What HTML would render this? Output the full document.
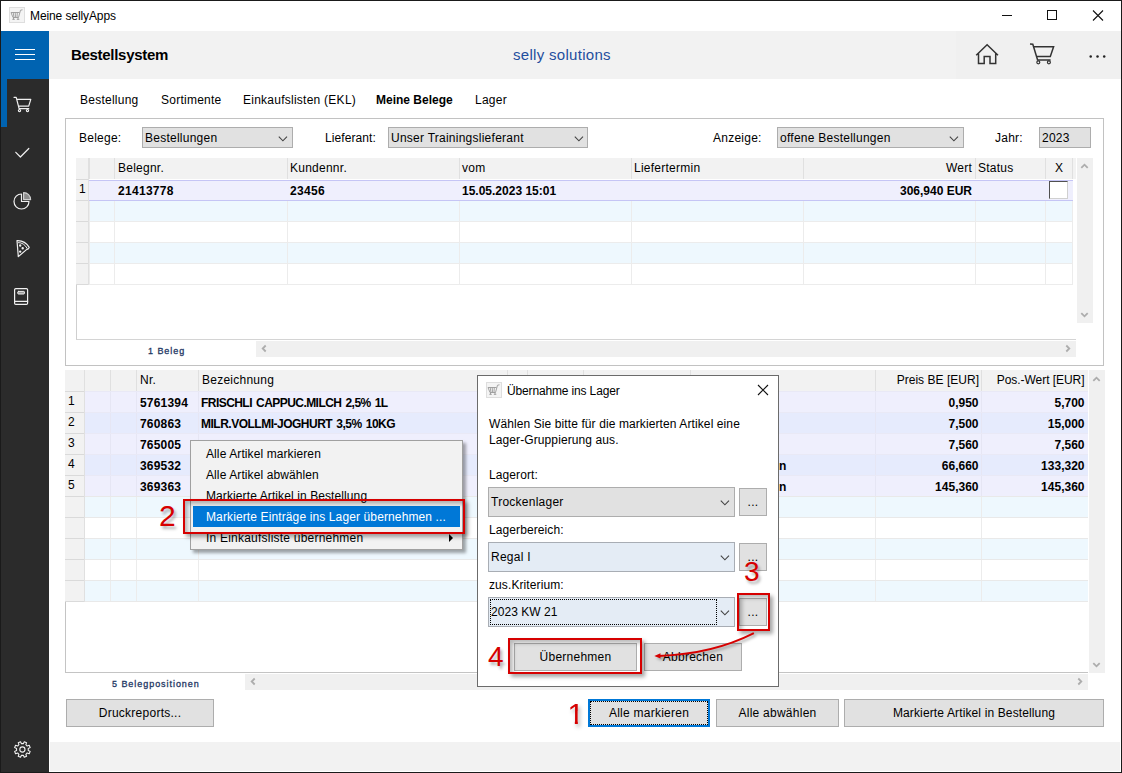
<!DOCTYPE html>
<html lang="de">
<head>
<meta charset="utf-8">
<title>Meine sellyApps</title>
<style>
*{box-sizing:border-box;margin:0;padding:0}
html,body{width:1122px;height:773px;overflow:hidden;background:#fff}
body{position:relative;font-family:"Liberation Sans",sans-serif;font-size:12px;color:#000;line-height:14px}
.a{position:absolute}
.t{position:absolute;white-space:nowrap;line-height:14px;letter-spacing:.25px}
.b{font-weight:bold;letter-spacing:0}
#frame{left:0;top:0;width:1122px;height:773px;border:1px solid #1a1a1a;z-index:50;pointer-events:none}
#titlebar{left:1px;top:1px;width:1120px;height:30px;background:#fff}
#side{left:1px;top:31px;width:48px;height:741px;background:#2b2b2b}
#burger{left:1px;top:31px;width:48px;height:48px;background:#0063b1}
#strip{left:1px;top:79px;width:6px;height:48px;background:#0063b1}
#head{left:49px;top:31px;width:1072px;height:48px;background:#f2f2f2}
#foot{left:50px;top:742px;width:1070px;height:29px;background:#f2f2f2}
.panel{border:1px solid #c2c2c2;background:#fff}
.combo{background:#e1e1e1;border:1px solid #adadad}
.combo.hot{background:#e4ecf5;border-color:#a8adb4}
.btn{background:#e1e1e1;border:1px solid #adadad;text-align:center;letter-spacing:.25px}
.hdr{background:#f2f2f2}
.vl{position:absolute;width:1px;background:#ececec}
.hl{position:absolute;height:1px;background:#ececec}
.red{color:#d60000;font-size:30px;line-height:30px;text-shadow:2px 3px 3px rgba(0,0,0,.3);letter-spacing:0}
.rbox{border:2.5px solid #d60000;box-shadow:3px 3px 4px rgba(0,0,0,.35), inset 3px 3px 4px rgba(0,0,0,.28)}
.sb{background:#f0f0f0}
.small{font-size:9px;letter-spacing:.95px;color:#1f3864;-webkit-text-stroke:.3px #1f3864}
</style>
</head>
<body>
<div class="a" id="titlebar"></div>
<div class="a" id="head"></div>
<div class="a" id="foot"></div>
<div class="a" id="side"></div>
<div class="a" id="burger"></div>
<div class="a" id="strip"></div>

<!-- TITLEBAR -->
<div class="t" style="left:30px;top:9px;font-size:12px;letter-spacing:-.1px">Meine sellyApps</div>

<!-- HEADER -->
<div class="t b" style="left:71px;top:46px;font-size:15px;line-height:18px;letter-spacing:-.3px">Bestellsystem</div>
<div class="t" style="left:513px;top:46px;font-size:15px;line-height:18px;color:#1f4e9e;letter-spacing:.3px">selly solutions</div>

<!-- TABS -->
<div class="t" style="left:80px;top:93px">Bestellung</div>
<div class="t" style="left:161px;top:93px">Sortimente</div>
<div class="t" style="left:243px;top:93px">Einkaufslisten (EKL)</div>
<div class="t b" style="left:376px;top:93px">Meine Belege</div>
<div class="t" style="left:475px;top:93px">Lager</div>

<!-- PANEL1 -->
<div class="a panel" id="p1" style="left:65px;top:118px;width:1039px;height:248px"></div>

<!-- SECTIONS -->

<div class="t" style="left:79px;top:131px">Belege:</div>
<div class="a combo" style="left:142px;top:127px;width:151px;height:21px"></div>
<div class="t" style="left:145px;top:131px">Bestellungen</div>
<svg class="a" style="left:278px;top:136px" width="10" height="6" viewBox="0 0 10 6"><path d="M0.8 0.6 L4.9 4.8 L9 0.6" fill="none" stroke="#444" stroke-width="1.1"/></svg>
<div class="t" style="left:325px;top:131px;letter-spacing:.08px">Lieferant:</div>
<div class="a combo" style="left:388px;top:127px;width:200px;height:21px"></div>
<div class="t" style="left:391px;top:131px">Unser Trainingslieferant</div>
<svg class="a" style="left:574px;top:136px" width="10" height="6" viewBox="0 0 10 6"><path d="M0.8 0.6 L4.9 4.8 L9 0.6" fill="none" stroke="#444" stroke-width="1.1"/></svg>
<div class="t" style="left:713px;top:131px">Anzeige:</div>
<div class="a combo" style="left:777px;top:127px;width:187px;height:21px"></div>
<div class="t" style="left:780px;top:131px">offene Bestellungen</div>
<svg class="a" style="left:949px;top:136px" width="10" height="6" viewBox="0 0 10 6"><path d="M0.8 0.6 L4.9 4.8 L9 0.6" fill="none" stroke="#444" stroke-width="1.1"/></svg>
<div class="t" style="left:995px;top:131px">Jahr:</div>
<div class="a combo" style="left:1039px;top:127px;width:52px;height:21px"></div>
<div class="t" style="left:1042px;top:131px">2023</div>

<div class="a" style="left:76px;top:158px;width:1000px;height:182px;border-left:1px solid #cfcfcf;border-bottom:1px solid #d4d4d4"></div>
<div class="a hdr" style="left:76px;top:158px;width:1000px;height:21px"></div>
<div class="a hdr" style="left:76px;top:158px;width:13px;height:127px"></div>
<div class="a" style="left:89px;top:180px;width:984px;height:21px;background:#efeffd;border-top:1px solid #c5c5f5;border-bottom:1px solid #c5c5f5"></div>
<div class="a" style="left:89px;top:201px;width:983px;height:20px;background:#eef8fe"></div>
<div class="a" style="left:89px;top:243px;width:983px;height:20px;background:#eef8fe"></div>
<div class="vl" style="left:89px;top:158px;height:21px;background:#e0e0e0"></div>
<div class="vl" style="left:89px;top:201px;height:84px"></div>
<div class="vl" style="left:114px;top:158px;height:21px;background:#e0e0e0"></div>
<div class="vl" style="left:114px;top:201px;height:84px"></div>
<div class="vl" style="left:287px;top:158px;height:21px;background:#e0e0e0"></div>
<div class="vl" style="left:287px;top:201px;height:84px"></div>
<div class="vl" style="left:459px;top:158px;height:21px;background:#e0e0e0"></div>
<div class="vl" style="left:459px;top:201px;height:84px"></div>
<div class="vl" style="left:631px;top:158px;height:21px;background:#e0e0e0"></div>
<div class="vl" style="left:631px;top:201px;height:84px"></div>
<div class="vl" style="left:803px;top:158px;height:21px;background:#e0e0e0"></div>
<div class="vl" style="left:803px;top:201px;height:84px"></div>
<div class="vl" style="left:975px;top:158px;height:21px;background:#e0e0e0"></div>
<div class="vl" style="left:975px;top:201px;height:84px"></div>
<div class="vl" style="left:1045px;top:158px;height:21px;background:#e0e0e0"></div>
<div class="vl" style="left:1045px;top:201px;height:84px"></div>
<div class="vl" style="left:1072px;top:158px;height:21px;background:#e0e0e0"></div>
<div class="vl" style="left:1072px;top:201px;height:84px"></div>
<div class="hl" style="left:76px;top:221px;width:997px"></div>
<div class="hl" style="left:76px;top:242px;width:997px"></div>
<div class="hl" style="left:76px;top:263px;width:997px"></div>
<div class="hl" style="left:76px;top:284px;width:997px"></div>
<div class="t" style="left:118px;top:161px">Belegnr.</div>
<div class="t" style="left:290px;top:161px">Kundennr.</div>
<div class="t" style="left:462px;top:161px">vom</div>
<div class="t" style="left:634px;top:161px">Liefertermin</div>
<div class="t" style="left:978px;top:161px">Status</div>
<div class="t" style="left:1055px;top:161px">X</div>
<div class="t" style="left:803px;top:161px;width:169px;text-align:right">Wert</div>
<div class="t" style="left:79px;top:182px">1</div>
<div class="t b" style="left:118px;top:184px;letter-spacing:.3px">21413778</div>
<div class="t b" style="left:290px;top:184px;letter-spacing:.3px">23456</div>
<div class="t b" style="left:462px;top:184px">15.05.2023 15:01</div>
<div class="t b" style="left:803px;top:184px;width:169px;text-align:right">306,940 EUR</div>
<div class="a" style="left:1049px;top:181px;width:19px;height:18px;background:#fff;border:1px solid #d0d0d0;border-left:1px solid #505050;border-top:1px solid #505050"></div>
<div class="a sb" style="left:1077px;top:158px;width:16px;height:165px"></div>
<svg class="a" style="left:1080px;top:163px" width="9" height="6" viewBox="0 0 9 6"><path d="M1.3 4.9 L4.5 1.7 L7.7 4.9" fill="none" stroke="#adadad" stroke-width="1.8"/></svg>
<svg class="a" style="left:1080px;top:312px" width="9" height="6" viewBox="0 0 9 6"><path d="M1.3 1.1 L4.5 4.3 L7.7 1.1" fill="none" stroke="#adadad" stroke-width="1.8"/></svg>
<div class="a sb" style="left:256px;top:341px;width:820px;height:16px"></div>
<svg class="a" style="left:261px;top:344px" width="6" height="9" viewBox="0 0 6 9"><path d="M4.7 1.5 L1.7 4.5 L4.7 7.5" fill="none" stroke="#adadad" stroke-width="1.8"/></svg>
<svg class="a" style="left:1065px;top:344px" width="6" height="9" viewBox="0 0 6 9"><path d="M1.3 1.5 L4.3 4.5 L1.3 7.5" fill="none" stroke="#adadad" stroke-width="1.8"/></svg>
<div class="t small" style="left:148px;top:344px">1 Beleg</div>
<div class="a" style="left:65px;top:370px;width:1023px;height:303px;border-left:1px solid #c4c4c4;border-bottom:1px solid #c4c4c4"></div>
<div class="a hdr" style="left:65px;top:370px;width:1023px;height:21px"></div>
<div class="a hdr" style="left:65px;top:370px;width:19px;height:232px"></div>
<div class="a" style="left:84px;top:392px;width:1004px;height:20px;background:#efeffd"></div>
<div class="a" style="left:84px;top:413px;width:1004px;height:20px;background:#e6ebfd"></div>
<div class="a" style="left:84px;top:434px;width:1004px;height:20px;background:#efeffd"></div>
<div class="a" style="left:84px;top:455px;width:1004px;height:20px;background:#e6ebfd"></div>
<div class="a" style="left:84px;top:476px;width:1004px;height:20px;background:#efeffd"></div>
<div class="a" style="left:84px;top:497px;width:1004px;height:20px;background:#eef8fe"></div>
<div class="a" style="left:84px;top:518px;width:1004px;height:20px;background:#ffffff"></div>
<div class="a" style="left:84px;top:539px;width:1004px;height:20px;background:#eef8fe"></div>
<div class="a" style="left:84px;top:560px;width:1004px;height:20px;background:#ffffff"></div>
<div class="a" style="left:84px;top:581px;width:1004px;height:20px;background:#eef8fe"></div>
<div class="vl" style="left:84px;top:370px;height:21px;background:#e0e0e0"></div>
<div class="vl" style="left:84px;top:497px;height:105px"></div>
<div class="vl" style="left:84px;top:392px;height:105px;background:#e6e6f4"></div>
<div class="vl" style="left:110px;top:370px;height:21px;background:#e0e0e0"></div>
<div class="vl" style="left:110px;top:497px;height:105px"></div>
<div class="vl" style="left:110px;top:392px;height:105px;background:#e6e6f4"></div>
<div class="vl" style="left:136px;top:370px;height:21px;background:#e0e0e0"></div>
<div class="vl" style="left:136px;top:497px;height:105px"></div>
<div class="vl" style="left:136px;top:392px;height:105px;background:#e6e6f4"></div>
<div class="vl" style="left:198px;top:370px;height:21px;background:#e0e0e0"></div>
<div class="vl" style="left:198px;top:497px;height:105px"></div>
<div class="vl" style="left:198px;top:392px;height:105px;background:#e6e6f4"></div>
<div class="vl" style="left:507px;top:370px;height:21px;background:#e0e0e0"></div>
<div class="vl" style="left:507px;top:497px;height:105px"></div>
<div class="vl" style="left:507px;top:392px;height:105px;background:#e6e6f4"></div>
<div class="vl" style="left:527px;top:370px;height:21px;background:#e0e0e0"></div>
<div class="vl" style="left:527px;top:497px;height:105px"></div>
<div class="vl" style="left:527px;top:392px;height:105px;background:#e6e6f4"></div>
<div class="vl" style="left:583px;top:370px;height:21px;background:#e0e0e0"></div>
<div class="vl" style="left:583px;top:497px;height:105px"></div>
<div class="vl" style="left:583px;top:392px;height:105px;background:#e6e6f4"></div>
<div class="vl" style="left:690px;top:370px;height:21px;background:#e0e0e0"></div>
<div class="vl" style="left:690px;top:497px;height:105px"></div>
<div class="vl" style="left:690px;top:392px;height:105px;background:#e6e6f4"></div>
<div class="vl" style="left:875px;top:370px;height:21px;background:#e0e0e0"></div>
<div class="vl" style="left:875px;top:497px;height:105px"></div>
<div class="vl" style="left:875px;top:392px;height:105px;background:#e6e6f4"></div>
<div class="vl" style="left:981px;top:370px;height:21px;background:#e0e0e0"></div>
<div class="vl" style="left:981px;top:497px;height:105px"></div>
<div class="vl" style="left:981px;top:392px;height:105px;background:#e6e6f4"></div>
<div class="hl" style="left:65px;top:391px;width:1023px;background:#e9e9f6"></div>
<div class="hl" style="left:65px;top:412px;width:1023px;background:#e9e9f6"></div>
<div class="hl" style="left:65px;top:433px;width:1023px;background:#e9e9f6"></div>
<div class="hl" style="left:65px;top:454px;width:1023px;background:#e9e9f6"></div>
<div class="hl" style="left:65px;top:475px;width:1023px;background:#e9e9f6"></div>
<div class="hl" style="left:65px;top:496px;width:1023px;background:#e9e9e9"></div>
<div class="hl" style="left:65px;top:517px;width:1023px;background:#e9e9e9"></div>
<div class="hl" style="left:65px;top:538px;width:1023px;background:#e9e9e9"></div>
<div class="hl" style="left:65px;top:559px;width:1023px;background:#e9e9e9"></div>
<div class="hl" style="left:65px;top:580px;width:1023px;background:#e9e9e9"></div>
<div class="hl" style="left:65px;top:601px;width:1023px;background:#e9e9e9"></div>
<div class="hl" style="left:65px;top:391px;width:19px;background:#dadada"></div>
<div class="hl" style="left:65px;top:412px;width:19px;background:#dadada"></div>
<div class="hl" style="left:65px;top:433px;width:19px;background:#dadada"></div>
<div class="hl" style="left:65px;top:454px;width:19px;background:#dadada"></div>
<div class="hl" style="left:65px;top:475px;width:19px;background:#dadada"></div>
<div class="hl" style="left:65px;top:496px;width:19px;background:#dadada"></div>
<div class="hl" style="left:65px;top:517px;width:19px;background:#dadada"></div>
<div class="hl" style="left:65px;top:538px;width:19px;background:#dadada"></div>
<div class="hl" style="left:65px;top:559px;width:19px;background:#dadada"></div>
<div class="hl" style="left:65px;top:580px;width:19px;background:#dadada"></div>
<div class="hl" style="left:65px;top:601px;width:19px;background:#dadada"></div>
<div class="vl" style="left:84px;top:370px;height:232px;background:#e0e0e0"></div>
<div class="hl" style="left:76px;top:179px;width:13px;background:#dadada"></div>
<div class="hl" style="left:76px;top:200px;width:13px;background:#dadada"></div>
<div class="hl" style="left:76px;top:221px;width:13px;background:#dadada"></div>
<div class="hl" style="left:76px;top:242px;width:13px;background:#dadada"></div>
<div class="hl" style="left:76px;top:263px;width:13px;background:#dadada"></div>
<div class="hl" style="left:76px;top:284px;width:13px;background:#dadada"></div>
<div class="vl" style="left:88px;top:158px;height:127px;background:#e0e0e0"></div>
<div class="t" style="left:140px;top:373px">Nr.</div>
<div class="t" style="left:202px;top:373px">Bezeichnung</div>
<div class="t" style="left:876px;top:373px;width:103px;text-align:right;letter-spacing:.02px">Preis BE [EUR]</div>
<div class="t" style="left:982px;top:373px;width:102.5px;text-align:right;letter-spacing:-.05px">Pos.-Wert [EUR]</div>
<div class="t" style="left:68px;top:394px">1</div>
<div class="t b" style="left:140px;top:396px;letter-spacing:.2px">5761394</div>
<div class="t b" style="left:201px;top:396px;letter-spacing:-.55px;word-spacing:1.3px">FRISCHLI CAPPUC.MILCH 2,5% 1L</div>
<div class="t b" style="left:876px;top:396px;width:102.5px;text-align:right">0,950</div>
<div class="t b" style="left:982px;top:396px;width:102.5px;text-align:right">5,700</div>
<div class="t" style="left:68px;top:415px">2</div>
<div class="t b" style="left:140px;top:417px;letter-spacing:.2px">760863</div>
<div class="t b" style="left:201px;top:417px;letter-spacing:-.5px;word-spacing:1.3px">MILR.VOLLMI-JOGHURT 3,5% 10KG</div>
<div class="t b" style="left:876px;top:417px;width:102.5px;text-align:right">7,500</div>
<div class="t b" style="left:982px;top:417px;width:102.5px;text-align:right">15,000</div>
<div class="t" style="left:68px;top:436px">3</div>
<div class="t b" style="left:140px;top:438px;letter-spacing:.2px">765005</div>
<div class="t b" style="left:876px;top:438px;width:102.5px;text-align:right">7,560</div>
<div class="t b" style="left:982px;top:438px;width:102.5px;text-align:right">7,560</div>
<div class="t" style="left:68px;top:457px">4</div>
<div class="t b" style="left:140px;top:459px;letter-spacing:.2px">369532</div>
<div class="t b" style="left:876px;top:459px;width:102.5px;text-align:right">66,660</div>
<div class="t b" style="left:982px;top:459px;width:102.5px;text-align:right">133,320</div>
<div class="t" style="left:68px;top:478px">5</div>
<div class="t b" style="left:140px;top:480px;letter-spacing:.2px">369363</div>
<div class="t b" style="left:876px;top:480px;width:102.5px;text-align:right">145,360</div>
<div class="t b" style="left:982px;top:480px;width:102.5px;text-align:right">145,360</div>
<div class="t b" style="left:779px;top:459px">n</div>
<div class="t b" style="left:779px;top:480px">n</div>
<div class="a sb" style="left:1089px;top:370px;width:16px;height:303px"></div>
<svg class="a" style="left:1092px;top:376px" width="9" height="6" viewBox="0 0 9 6"><path d="M1.3 4.9 L4.5 1.7 L7.7 4.9" fill="none" stroke="#adadad" stroke-width="1.8"/></svg>
<svg class="a" style="left:1092px;top:662px" width="9" height="6" viewBox="0 0 9 6"><path d="M1.3 1.1 L4.5 4.3 L7.7 1.1" fill="none" stroke="#adadad" stroke-width="1.8"/></svg>
<div class="a sb" style="left:245px;top:674px;width:843px;height:16px"></div>
<svg class="a" style="left:250px;top:677px" width="6" height="9" viewBox="0 0 6 9"><path d="M4.7 1.5 L1.7 4.5 L4.7 7.5" fill="none" stroke="#adadad" stroke-width="1.8"/></svg>
<svg class="a" style="left:1077px;top:677px" width="6" height="9" viewBox="0 0 6 9"><path d="M1.3 1.5 L4.3 4.5 L1.3 7.5" fill="none" stroke="#adadad" stroke-width="1.8"/></svg>
<div class="t small" style="left:112px;top:677px">5 Belegpositionen</div>

<div class="a btn" style="left:66px;top:699px;width:148px;height:28px;line-height:26px">Druckreports...</div>
<div class="a btn" style="left:588px;top:699px;width:122px;height:28px;border:2px solid #0078d7"></div>
<div class="a" style="left:590px;top:701px;width:118px;height:24px;border:1px dotted #000"></div>
<div class="t" style="left:588px;top:706px;width:122px;text-align:center">Alle markieren</div>
<div class="a btn" style="left:716px;top:699px;width:123px;height:28px;line-height:26px">Alle abwählen</div>
<div class="a btn" style="left:844px;top:699px;width:260px;height:28px;line-height:26px;letter-spacing:.13px">Markierte Artikel in Bestellung</div>
<div class="a" style="left:567.5px;top:699px;filter:drop-shadow(2px 3px 2px rgba(0,0,0,.32))"><div class="red" style="white-space:nowrap;text-shadow:none;clip-path:polygon(0 0,100% 0,100% 40%,62% 40%,62% 100%,44% 100%,44% 60%,0 60%)">1</div></div>


<div class="a" style="left:190px;top:440px;width:273px;height:110px;background:#f2f2f2;border:1px solid #a0a0a0;box-shadow:3px 3px 3px rgba(0,0,0,.35)"></div>
<div class="t" style="left:206px;top:447px;letter-spacing:.1px">Alle Artikel markieren</div>
<div class="t" style="left:206px;top:468px;letter-spacing:.1px">Alle Artikel abwählen</div>
<div class="t" style="left:206px;top:489px;letter-spacing:.1px">Markierte Artikel in Bestellung</div>
<div class="t" style="left:206px;top:531px;letter-spacing:.22px">In Einkaufsliste übernehmen</div>
<div class="a" style="left:449px;top:534px;width:0;height:0;border-left:4px solid #000;border-top:4px solid transparent;border-bottom:4px solid transparent"></div>
<div class="a" style="left:193px;top:506px;width:267px;height:21px;background:#0078d7"></div>
<div class="t" style="left:206px;top:510px;color:#fff;letter-spacing:.12px">Markierte Einträge ins Lager übernehmen ...</div>
<div class="a rbox" style="left:183px;top:499px;width:282px;height:35px"></div>
<div class="t red" style="left:159px;top:501px">2</div>


<div class="a" style="left:477px;top:375px;width:302px;height:312px;background:#fff;border:1px solid #6b6b6b"></div>
<div class="t" style="left:507px;top:384px;font-size:12px;letter-spacing:-.15px">Übernahme ins Lager</div>
<svg class="a" style="left:757px;top:384px" width="12" height="12" viewBox="0 0 12 12"><path d="M1 1 L11 11 M11 1 L1 11" fill="none" stroke="#111" stroke-width="1.1"/></svg>
<div class="t" style="left:489px;top:416px;line-height:16px;letter-spacing:.1px">Wählen Sie bitte für die markierten Artikel eine<br>Lager-Gruppierung aus.</div>
<div class="t" style="left:489px;top:468px;letter-spacing:.1px">Lagerort:</div>
<div class="a combo" style="left:488px;top:487px;width:247px;height:30px"></div>
<div class="t" style="left:491px;top:495px">Trockenlager</div>
<svg class="a" style="left:720px;top:500px" width="10" height="6" viewBox="0 0 10 6"><path d="M0.8 0.6 L4.9 4.8 L9 0.6" fill="none" stroke="#444" stroke-width="1.1"/></svg>
<div class="a btn" style="left:739px;top:488px;width:28px;height:28px;line-height:26px">...</div>
<div class="t" style="left:489px;top:523px;letter-spacing:.1px">Lagerbereich:</div>
<div class="a combo hot" style="left:488px;top:542px;width:247px;height:30px"></div>
<div class="t" style="left:491px;top:550px">Regal I</div>
<svg class="a" style="left:720px;top:555px" width="10" height="6" viewBox="0 0 10 6"><path d="M0.8 0.6 L4.9 4.8 L9 0.6" fill="none" stroke="#444" stroke-width="1.1"/></svg>
<div class="a btn" style="left:739px;top:543px;width:28px;height:28px;line-height:26px">...</div>
<div class="t" style="left:489px;top:578px;letter-spacing:.1px">zus.Kriterium:</div>
<div class="a combo hot" style="left:488px;top:597px;width:247px;height:30px"></div>
<div class="a" style="left:490px;top:599px;width:227px;height:26px;border:1px dotted #000"></div>
<div class="t" style="left:491px;top:605px;letter-spacing:.05px">2023 KW 21</div>
<svg class="a" style="left:720px;top:610px" width="10" height="6" viewBox="0 0 10 6"><path d="M0.8 0.6 L4.9 4.8 L9 0.6" fill="none" stroke="#444" stroke-width="1.1"/></svg>
<div class="a btn" style="left:739px;top:598px;width:28px;height:28px;line-height:26px">...</div>
<div class="a rbox" style="left:737px;top:593px;width:33px;height:38px"></div>
<div class="t red" style="left:744px;top:557px;font-size:28px">3</div>
<div class="a btn" style="left:514px;top:643px;width:123px;height:28px;line-height:26px">Übernehmen</div>
<div class="a btn" style="left:644px;top:643px;width:98px;height:28px;line-height:26px">Abbrechen</div>
<div class="a rbox" style="left:508px;top:638px;width:134px;height:36px"></div>
<div class="t red" style="left:488px;top:642px;font-size:28px">4</div>
<svg class="a" style="left:640px;top:625px;overflow:visible" width="130" height="45" viewBox="0 0 130 45"><g style="filter:drop-shadow(2px 2px 1.5px rgba(0,0,0,.35))"><path d="M113.9 8.2 Q72 29.4 19 30.9" fill="none" stroke="#d60000" stroke-width="2"/><path d="M14.3 30.9 L20.5 28.2 L20.5 33.6 Z" fill="#d60000"/></g></svg>


<!-- title icon -->
<svg class="a" style="left:9px;top:7px" width="16" height="16" viewBox="0 0 16 16"><rect x="0.5" y="0.5" width="15" height="15" fill="#f4f4f4" stroke="#dedede"/><path d="M2 5.5 L4 10.5 L9.5 10.5 L11.5 3.2 L13.5 2.8 M2 5.5 L10.5 5.5 M4.2 5.5 L5 10.5 M6.2 5.5 L6.5 10.5 M8.3 5.5 L8 10.5 M4.5 10.5 L4.5 12.5 M9 10.5 L9 12.5 M3.3 12.3 L5.8 12.3 M7.8 12.3 L10.3 12.3" fill="none" stroke="#9a9a9a" stroke-width="0.9"/></svg>
<!-- window buttons -->
<svg class="a" style="left:995px;top:5px" width="120" height="22" viewBox="0 0 120 22"><path d="M7 10.5 H17" stroke="#111" stroke-width="1" fill="none"/><rect x="52.5" y="5.5" width="9" height="9" fill="none" stroke="#111" stroke-width="1"/><path d="M98 5.5 L108 15.5 M108 5.5 L98 15.5" stroke="#111" stroke-width="1.1" fill="none"/></svg>
<!-- hamburger -->
<svg class="a" style="left:1px;top:31px" width="48" height="48" viewBox="0 0 48 48"><path d="M14 18.5 H34 M14 23.5 H34 M14 28.5 H34" stroke="#fff" stroke-width="1.2" fill="none"/></svg>
<!-- sidebar icons -->
<svg class="a" style="left:0;top:0" width="50" height="773" viewBox="0 0 50 773" fill="none" stroke="#f0f0f0" stroke-width="1.2" stroke-linejoin="round" stroke-linecap="round">
<path d="M14 97.3 L16.2 97.3 L19.1 108.7 L28.8 108.7 M16.8 99.4 L30.8 99.4 L28.7 106.1 L18.4 106.1"/>
<circle cx="19.5" cy="110.6" r="1.1"/><circle cx="27.5" cy="110.6" r="1.1"/>
<path d="M15.8 152.3 L20.4 157 L28.8 148.5"/>
<path d="M21.5 194 A7.5 7.5 0 1 0 29 201.5 L21.5 201.5 Z"/>
<path d="M23.6 192.6 L23.6 199.6 L30.6 199.6 A7 7 0 0 0 23.6 192.6 Z" stroke="#d0d0d0" stroke-width="1.2" fill="#8c8c8c"/>
<path d="M17 240.6 Q25 240.2 29.2 247.4 Q28.6 249.6 26.8 249.4 L18.3 256.6 Z"/>
<path d="M18.5 242.6 Q24 242.6 27.2 248.4" stroke-width="1"/>
<circle cx="20.2" cy="245.5" r="0.6" fill="#f0f0f0"/><circle cx="22.7" cy="248.3" r="0.6" fill="#f0f0f0"/><circle cx="20.2" cy="251.6" r="0.6" fill="#f0f0f0"/>
<rect x="14.6" y="288.6" width="13" height="15.8" rx="1.2"/>
<path d="M14.6 301.4 H27.6"/>
<rect x="17.8" y="291.4" width="6.6" height="2.6" rx="0.6" fill="#9a9a9a" stroke-width="1"/>
<path d="M24.27 741.72 L26.58 742.68 L25.87 744.73 L27.17 746.03 L29.22 745.32 L30.18 747.63 L28.23 748.58 L28.23 750.42 L30.18 751.37 L29.22 753.68 L27.17 752.97 L25.87 754.27 L26.58 756.32 L24.27 757.28 L23.32 755.33 L21.48 755.33 L20.53 757.28 L18.22 756.32 L18.93 754.27 L17.63 752.97 L15.58 753.68 L14.62 751.37 L16.57 750.42 L16.57 748.58 L14.62 747.63 L15.58 745.32 L17.63 746.03 L18.93 744.73 L18.22 742.68 L20.53 741.72 L21.48 743.67 L23.32 743.67 Z" stroke-width="1.1"/>
<circle cx="22.4" cy="749.5" r="2.6" stroke-width="1.1"/>
</svg>
<!-- header icons -->
<div class="a" style="left:956px;top:31px;width:165px;height:48px;background:#f0f0f0"></div>
<svg class="a" style="left:960px;top:31px" width="160" height="48" viewBox="960 31 160 48" fill="none" stroke="#333" stroke-width="1.5">
<path d="M976.2 55.2 L987.1 44.8 L998 55.2 M978.5 53.2 V63.6 H984.2 V56.6 H990 V63.6 H995.7 V53.2"/>
<path d="M1030 44 L1032.8 44.2 L1037.6 59.9 L1050.6 59.9 M1033.6 46.7 L1053.6 46.7 L1050.3 56.4 L1036.4 56.4"/>
<circle cx="1038.3" cy="62.3" r="1.5" stroke-width="1.2"/><circle cx="1048.9" cy="62.3" r="1.5" stroke-width="1.2"/>
<circle cx="1090.7" cy="56.5" r="1.25" fill="#222" stroke="none"/><circle cx="1097.5" cy="56.5" r="1.25" fill="#222" stroke="none"/><circle cx="1104.2" cy="56.5" r="1.25" fill="#222" stroke="none"/>
</svg>
<!-- dialog icon -->
<svg class="a" style="left:486px;top:382px" width="16" height="16" viewBox="0 0 16 16"><rect x="0.5" y="0.5" width="15" height="15" fill="#f4f4f4" stroke="#dedede"/><path d="M2 5.5 L4 10.5 L9.5 10.5 L11.5 3.2 L13.5 2.8 M2 5.5 L10.5 5.5 M4.2 5.5 L5 10.5 M6.2 5.5 L6.5 10.5 M8.3 5.5 L8 10.5 M4.5 10.5 L4.5 12.5 M9 10.5 L9 12.5 M3.3 12.3 L5.8 12.3 M7.8 12.3 L10.3 12.3" fill="none" stroke="#9a9a9a" stroke-width="0.9"/></svg>


<div class="a" id="frame"></div>
</body>
</html>
